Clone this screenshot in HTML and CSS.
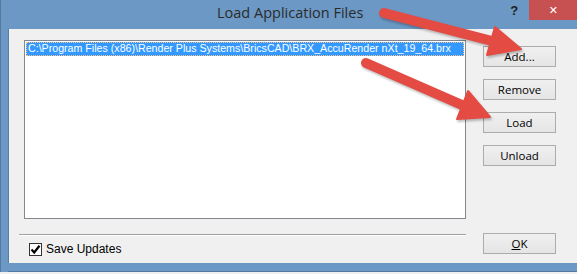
FILE: index.html
```html
<!DOCTYPE html>
<html lang="en">

<head>
    <meta charset="utf-8">
    <title>Load Application Files</title>
    <link rel="stylesheet" href="styles.css">
</head>

<body>
    <div class="window">
        <div class="titlebar">
            <span class="title">Load Application Files</span>
            <span class="help">?</span>
            <span class="close">&#x2715;</span>
        </div>
        <div class="client">
            <div class="left">
                <div class="listbox">
                    <div class="item">C:\Program Files (x86)\Render Plus Systems\BricsCAD\BRX_AccuRender nXt_19_64.brx</div>
                </div>
                <div class="separator"></div>
                <label class="check">
                    <span class="box">
                        <svg width="11" height="11" viewBox="0 0 11 11">
                            <path d="M1.5 5.5 L4.2 8.5 L9.5 1.8" fill="none" stroke="#000" stroke-width="2.2"></path>
                        </svg>
                    </span>
                    Save Updates
                </label>
            </div>
            <div class="buttons">
                <button class="btn">Add...</button>
                <button class="btn">Remove</button>
                <button class="btn">Load</button>
                <button class="btn">Unload</button>
                <button class="btn ok"><u>O</u>K</button>
            </div>
            <div class="grip"></div>
        </div>
        <div class="bottom-edge"></div>
    </div>

    <!-- annotation arrows drawn on top of the dialog -->
    <svg class="arrows" width="577" height="274" viewBox="0 0 577 274">
        <g fill="#e44b43" stroke="#e44b43" stroke-linecap="round">
            <line x1="384" y1="13" x2="492" y2="41" stroke-width="10"></line>
            <polygon points="495,27 487,55 521,49" stroke-width="2" stroke-linejoin="round"></polygon>
            <line x1="366" y1="63" x2="462" y2="105" stroke-width="10"></line>
            <polygon points="468,91 457,119 490,117" stroke-width="2" stroke-linejoin="round"></polygon>
        </g>
    </svg>
</body>

</html>
```

FILE: styles.css
```css
* {
    margin: 0;
    padding: 0;
    box-sizing: border-box;
}

body {
    width: 577px;
    height: 274px;
    overflow: hidden;
    background-color: #f0f0f0;
    font-family: "Liberation Sans", "DejaVu Sans", sans-serif;
    position: relative;
}

.window {
    width: 590px;
    background-color: #6b98c4;
    border-left: 1px solid #54799f;
    padding: 0 0 0 7px;
}

.titlebar {
    height: 29px;
    display: flex;
    align-items: flex-start;
    position: relative;
}

.title {
    font-family: "Open Sans", "Noto Sans", sans-serif;
    font-size: 14.5px;
    color: #2b2b2b;
    margin-left: 209px;
    margin-top: 3px;
}

.help {
    font-family: "Liberation Sans", sans-serif;
    font-weight: bold;
    font-size: 13px;
    color: #1e1e1e;
    margin-left: 147px;
    margin-top: 3px;
}

.close {
    width: 48px;
    height: 20px;
    margin-left: 11px;
    background-color: #c75050;
    color: #fff;
    font-size: 11px;
    font-weight: bold;
    display: flex;
    justify-content: center;
    align-items: center;
}

.client {
    background-color: #f0f0f0;
    height: 234px;
    border-left: 1px solid #5a7fa6;
    display: flex;
    padding: 11px 0 0 15px;
    position: relative;
}

.left {
    width: 442px;
    display: flex;
    flex-direction: column;
}

.listbox {
    height: 179px;
    background-color: #fff;
    border: 1px solid #828790;
    padding: 1px;
}

.item {
    height: 14px;
    background-color: #3399ff;
    color: #fff;
    font-family: "Liberation Sans", sans-serif;
    font-size: 10.65px;
    line-height: 13px;
    padding-left: 2px;
    outline: 1px dotted #f5c28a;
    outline-offset: -1px;
    white-space: nowrap;
    overflow: hidden;
}

.separator {
    margin: 15px 0 0 -5px;
    width: 447px;
    height: 2px;
    border-top: 1px solid #a0a0a0;
    border-bottom: 1px solid #fff;
}

.check {
    display: flex;
    align-items: center;
    gap: 4px;
    margin: 6px 0 0 5px;
    font-size: 12px;
    color: #000;
}

.box {
    width: 13px;
    height: 13px;
    border: 1px solid #333;
    background-color: #fff;
    display: flex;
    align-items: center;
    justify-content: center;
}

.buttons {
    display: flex;
    flex-direction: column;
    gap: 12px;
    margin: 6px 0 0 17px;
}

.btn {
    width: 73px;
    height: 21px;
    border: 1px solid #acacac;
    background: linear-gradient(#f0f0f0, #e5e5e5);
    font-family: "Open Sans", "Noto Sans", sans-serif;
    font-size: 11.5px;
    color: #000;
}

.ok {
    margin-top: 55px;
}

.grip {
    position: absolute;
    right: 2px;
    bottom: 2px;
    width: 11px;
    height: 11px;
    background:
        radial-gradient(circle, #b8b8b8 1px, transparent 1.2px) 0 0 / 4px 4px;
    clip-path: polygon(100% 0, 100% 100%, 0 100%);
}

.bottom-edge {
    height: 9px;
    background-color: #6b98c4;
    border-bottom: 1px solid #54799f;
}

.arrows {
    position: absolute;
    left: 0;
    top: 0;
    pointer-events: none;
    filter: drop-shadow(1px 2px 1px rgba(0, 0, 0, .25));
}
```
